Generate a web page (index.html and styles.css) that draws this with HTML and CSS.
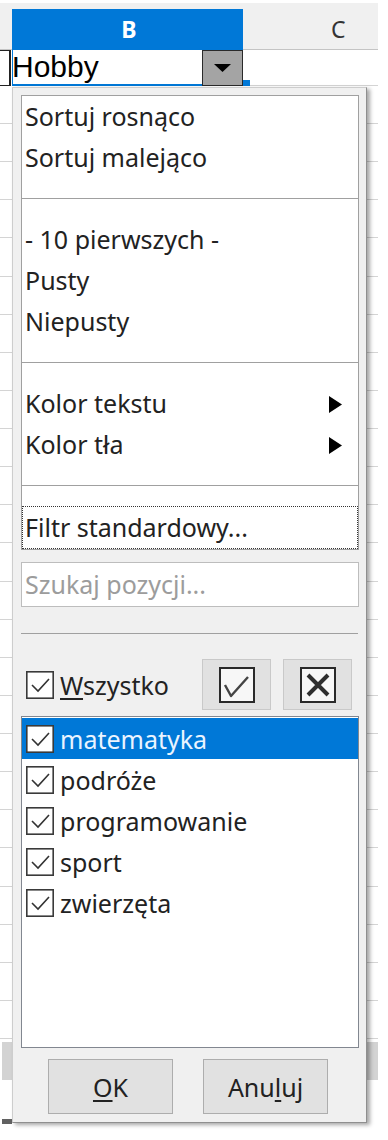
FILE: index.html
```html
<!DOCTYPE html>
<html lang="pl">
<head>
<meta charset="utf-8">
<title>Autofiltr</title>
<link rel="stylesheet" href="styles.css">
</head>
<body>
<div class="sheet">
  <div class="colhead">
    <div class="corner"></div>
    <div class="col-b"><span>B</span></div>
    <div class="col-c"><span>C</span></div>
  </div>
  <div class="row1">
    <div class="cell-a"></div>
    <div class="cell-b">
      <span class="hobby">Hobby</span>
      <span class="dd-btn"><svg width="17" height="8" viewBox="0 0 17 8"><path d="M0 0H17L8.5 8Z" fill="#000"/></svg></span>
      <span class="fill-handle"></span>
    </div>
    <div class="cell-c"></div>
  </div>
  <div class="grid">
    <div class="grid-rows"></div>
    <div class="band"></div>
    <div class="grid-tail"></div>
  </div>

  <div class="popup">
    <div class="menu">
      <div class="mi">Sortuj rosnąco</div>
      <div class="mi">Sortuj malejąco</div>
      <div class="msep"></div>
      <div class="mi">- 10 pierwszych -</div>
      <div class="mi">Pusty</div>
      <div class="mi">Niepusty</div>
      <div class="msep"></div>
      <div class="mi sub"><span>Kolor tekstu</span><svg class="arrow" width="13" height="17" viewBox="0 0 13 17"><path d="M0 0L13 8.5L0 17Z" fill="#000"/></svg></div>
      <div class="mi sub"><span>Kolor tła</span><svg class="arrow" width="13" height="17" viewBox="0 0 13 17"><path d="M0 0L13 8.5L0 17Z" fill="#000"/></svg></div>
      <div class="msep"></div>
      <div class="mi focus">Filtr standardowy...</div>
    </div>
    <div class="search">Szukaj pozycji...</div>
    <div class="hr"></div>
    <div class="allrow">
      <div class="all">
        <svg class="cb" width="28" height="28" viewBox="0 0 28 28"><rect x="0.8" y="0.8" width="26.4" height="26.4" fill="#fff" stroke="#3a3a3a" stroke-width="1.6"/><path d="M6 14L12 20L23 8" fill="none" stroke="#333" stroke-width="1.6"/></svg>
        <span><u>W</u>szystko</span>
      </div>
      <div class="tbtns">
        <div class="tbtn"><svg width="36" height="36" viewBox="0 0 36 36"><rect x="1" y="1" width="34" height="34" fill="#f7f7f7" stroke="#2a2a2a" stroke-width="2"/><path d="M6 18L12 29L29 10" fill="none" stroke="#444" stroke-width="2.4" stroke-linejoin="round"/></svg></div>
        <div class="tbtn"><svg width="36" height="36" viewBox="0 0 36 36"><rect x="1" y="1" width="34" height="34" fill="#f7f7f7" stroke="#2a2a2a" stroke-width="2"/><path d="M8 8L28 28M28 8L8 28" fill="none" stroke="#2e2e2e" stroke-width="4"/></svg></div>
      </div>
    </div>
    <div class="list">
      <div class="li sel"><svg class="cb" width="28" height="28" viewBox="0 0 28 28"><rect x="0.8" y="0.8" width="26.4" height="26.4" fill="#fff" stroke="#3a3a3a" stroke-width="1.6"/><path d="M6 14L12 20L23 8" fill="none" stroke="#333" stroke-width="1.6"/></svg><span>matematyka</span></div>
      <div class="li"><svg class="cb" width="28" height="28" viewBox="0 0 28 28"><rect x="0.8" y="0.8" width="26.4" height="26.4" fill="#fff" stroke="#3a3a3a" stroke-width="1.6"/><path d="M6 14L12 20L23 8" fill="none" stroke="#333" stroke-width="1.6"/></svg><span>podróże</span></div>
      <div class="li"><svg class="cb" width="28" height="28" viewBox="0 0 28 28"><rect x="0.8" y="0.8" width="26.4" height="26.4" fill="#fff" stroke="#3a3a3a" stroke-width="1.6"/><path d="M6 14L12 20L23 8" fill="none" stroke="#333" stroke-width="1.6"/></svg><span>programowanie</span></div>
      <div class="li"><svg class="cb" width="28" height="28" viewBox="0 0 28 28"><rect x="0.8" y="0.8" width="26.4" height="26.4" fill="#fff" stroke="#3a3a3a" stroke-width="1.6"/><path d="M6 14L12 20L23 8" fill="none" stroke="#333" stroke-width="1.6"/></svg><span>sport</span></div>
      <div class="li"><svg class="cb" width="28" height="28" viewBox="0 0 28 28"><rect x="0.8" y="0.8" width="26.4" height="26.4" fill="#fff" stroke="#3a3a3a" stroke-width="1.6"/><path d="M6 14L12 20L23 8" fill="none" stroke="#333" stroke-width="1.6"/></svg><span>zwierzęta</span></div>
    </div>
    <div class="actions">
      <button class="btn" type="button"><u>O</u>K</button>
      <button class="btn" type="button">Anu<u>l</u>uj</button>
    </div>
  </div>
</div>
</body>
</html>
```

FILE: styles.css
```css
html, body {
  margin: 0;
  padding: 0;
  background: #fff;
}
body {
  font-family: "Noto Sans", "DejaVu Sans", sans-serif;
}
.sheet {
  position: relative;
  width: 388px;
  height: 1140px;
  overflow: hidden;
}

/* column header */
.colhead {
  display: flex;
  margin-top: 3px;
  height: 47px;
  line-height: 1;
}
.corner {
  width: 12px;
  background: #f0f0f0;
  border-bottom: 1px solid #c4c4c4;
  box-sizing: border-box;
}
.col-b {
  width: 231px;
  box-sizing: border-box;
  padding: 6px 0 0 3px;
  background: linear-gradient(to bottom, #f0f0f0 0 6px, #0078d7 6px);
  color: #fff;
  font-weight: 700;
  font-size: 23px;
  display: flex;
  align-items: center;
  justify-content: center;
}
.col-c {
  width: 135px;
  box-sizing: border-box;
  padding: 6px 0 0 88px;
  background: #f0f0f0;
  border-bottom: 1px solid #c4c4c4;
  color: #333;
  font-size: 23px;
  display: flex;
  align-items: center;
}

/* first row */
.row1 {
  display: flex;
  height: 36px;
}
.cell-a {
  width: 11px;
  margin-right: 1px;
  box-sizing: border-box;
  border: 1.5px solid #222;
  border-left: 0;
  border-right-width: 2px;
}
.cell-b {
  width: 231px;
  box-sizing: border-box;
  position: relative;
  display: flex;
  align-items: flex-start;
  background: #fff;
  border-left: 1.5px solid #0078d7;
  border-bottom: 2px solid #0078d7;
}
.hobby {
  font-family: "Liberation Sans", Arial, sans-serif;
  font-size: 30px;
  line-height: 34px;
  color: #000;
  margin-left: -1px;
}
.dd-btn {
  margin-left: auto;
  width: 41px;
  height: 36px;
  box-sizing: border-box;
  border: 1.5px solid #2a2a2a;
  background: #a4a4a4;
  display: flex;
  align-items: center;
  justify-content: center;
}
.fill-handle {
  position: absolute;
  right: -7px;
  bottom: -2px;
  width: 7px;
  height: 6px;
  background: #0078d7;
}
.cell-c {
  width: 135px;
  box-sizing: border-box;
  border-bottom: 1px solid #d4d4d4;
}

/* sheet grid */
.grid {
  width: 378px;
}
.grid-rows {
  height: 956px;
  background: repeating-linear-gradient(to bottom, transparent 0 37.12px, #d4d4d4 37.12px 38.12px);
}
.band {
  height: 38px;
  background: linear-gradient(to right, transparent 0 2px, #d3d3d3 2px 12px, transparent 12px 366px, #d3d3d3 366px 378px, transparent 378px);
}
.grid-tail {
  height: 60px;
  background: linear-gradient(#616161, #616161) no-repeat 2px 39px / 10px 5px;
}

/* popup */
.popup {
  position: absolute;
  left: 12px;
  top: 87px;
  width: 355px;
  box-sizing: border-box;
  padding: 7px 7px 8px 8px;
  background: #f0f0f0;
  border: 1px solid #cdcdcd;
  border-right-color: #8f8f8f;
  border-bottom-color: #8f8f8f;
  box-shadow: 3px 2px 4px rgba(0, 0, 0, 0.35);
  font-size: 25px;
  color: #222;
}
.menu {
  background: #fff;
  border: 1px solid #a0a0a0;
}
.mi {
  height: 41px;
  line-height: 41px;
  padding: 0 16px 0 3px;
  white-space: nowrap;
}
.mi.sub {
  display: flex;
  align-items: center;
  justify-content: space-between;
}
.arrow {
  display: block;
  margin-top: 2px;
}
.msep {
  height: 41px;
  display: flex;
  align-items: center;
}
.msep::before {
  content: "";
  flex: 1;
  height: 1px;
  background: #a0a0a0;
}
.mi.focus {
  height: 43px;
  box-sizing: border-box;
  border: 1px dotted #333;
  padding-left: 2px;
}
.search {
  margin-top: 12px;
  height: 45px;
  box-sizing: border-box;
  border: 1px solid #bdbdbd;
  background: #fff;
  color: #9c9c9c;
  line-height: 43px;
  padding-left: 3px;
}
.hr {
  margin-top: 26px;
  margin-right: 1px;
  height: 1px;
  background: #a0a0a0;
}
.allrow {
  margin-top: 25px;
  height: 51px;
  display: flex;
  align-items: center;
}
.all {
  display: flex;
  align-items: center;
  gap: 6px;
  padding-left: 5px;
  line-height: 34px;
}
.all u,
.btn u {
  text-decoration-thickness: 1.5px;
  text-underline-offset: 3px;
}
.cb {
  display: block;
  flex: none;
}
.tbtns {
  margin-left: auto;
  margin-right: 7px;
  display: flex;
  gap: 12px;
}
.tbtn {
  width: 69px;
  height: 51px;
  box-sizing: border-box;
  background: #e1e1e1;
  border: 1px solid #c9c9c9;
  display: flex;
  align-items: center;
  justify-content: center;
}
.list {
  margin-top: 6px;
  height: 332px;
  box-sizing: border-box;
  border: 1px solid #828790;
  background: #fff;
  padding-top: 1px;
}
.li {
  height: 41px;
  display: flex;
  align-items: center;
  gap: 6px;
  padding-left: 4px;
  line-height: 34px;
}
.li.sel {
  background: #0078d7;
  color: #eaf4ff;
}
.actions {
  margin-top: 11px;
  height: 55px;
  display: flex;
  gap: 30px;
  padding-left: 27px;
}
.btn {
  width: 125px;
  height: 55px;
  margin: 0;
  padding: 0;
  box-sizing: border-box;
  background: #e1e1e1;
  border: 1px solid #adadad;
  border-radius: 0;
  font-family: "Noto Sans", "DejaVu Sans", sans-serif;
  font-size: 25px;
  color: #222;
}
```
